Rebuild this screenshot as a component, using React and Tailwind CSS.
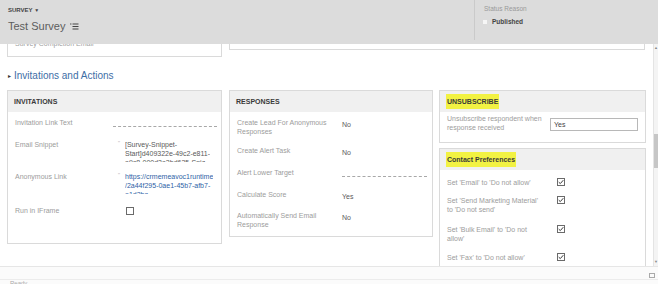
import React from "react";

function CheckBox({ checked }) {
  return (
    <svg width="8" height="8" viewBox="0 0 8 8" className="block">
      <rect x="0.5" y="0.5" width="7" height="7" fill="white" stroke="#6a6a6a" />
      {checked && <path d="M1.7 4.1 L3.3 5.6 L6.3 2.2" fill="none" stroke="#3a3a3a" strokeWidth="1" />}
    </svg>
  );
}

function Card({ title, highlight, className, children }) {
  return (
    <div className={`border border-[#dadada] bg-white overflow-hidden ${className}`}>
      <div className="h-[21px] bg-[#f0f0f0] px-[6px] flex items-center">
        {highlight ? (
          <span className="bg-[#f2f243] px-[1px] py-[3px] text-[7px] font-bold text-[#3a3a3a]">{title}</span>
        ) : (
          <span className="text-[7px] font-bold text-[#3a3a3a]">{title}</span>
        )}
      </div>
      {children}
    </div>
  );
}

function Dashed({ w }) {
  return <div className={`border-b border-dashed border-[#a8a8a8] mt-[5px] ${w}`} />;
}

export default function App() {
  return (
    <div className="w-[658px] h-[284px] overflow-hidden bg-white flex flex-col font-['Liberation_Sans',Arial,sans-serif] leading-[9px]">
      {/* header */}
      <div className="h-[44px] shrink-0 bg-[#dcdcdc] flex">
        <div className="w-[474px] pl-[8px] pt-[6px]">
          <div className="text-[6px] font-bold text-[#444] leading-[8px]">
            SURVEY <span className="text-[5px]">▼</span>
          </div>
          <div className="flex items-center gap-[5px] mt-[5px]">
            <span className="text-[11px] leading-[14px] text-[#5c5c5c]">Test Survey</span>
            <svg width="9" height="7" viewBox="0 0 9 7">
              <rect x="0" y="0.5" width="1.5" height="1" fill="#555" />
              <rect x="2.5" y="0.5" width="6" height="1" fill="#444" />
              <rect x="2.5" y="3" width="6" height="1" fill="#444" />
              <rect x="2.5" y="5.5" width="6" height="1" fill="#444" />
            </svg>
          </div>
        </div>
        <div className="flex-1 flex">
          <div className="w-[1px] h-[40px] bg-[#cacaca]" />
          <div className="pl-[9px] pt-[5px]">
            <div className="text-[6.5px] text-[#9a9a9a] leading-[8px]">Status Reason</div>
            <div className="flex items-center gap-[5px] mt-[4px] -ml-[1px]">
              <div className="w-[4px] h-[4px] bg-[#f6f6f6]" />
              <span className="text-[6.5px] font-bold text-[#444]">Published</span>
            </div>
          </div>
        </div>
      </div>

      {/* body */}
      <div className="h-[222px] shrink-0 flex">
        <div className="w-[653px] pl-[7px]">
          <div className="flex gap-[7px] h-[13px]">
            <div className="w-[215px] h-[13px] border-x border-b border-[#dadada] overflow-hidden">
              <div className="pl-[7px] -mt-[5px] text-[7px] text-[#a0a0a0]">Survey Completion Email</div>
            </div>
            <div className="w-[416px] h-[6px] border-x border-b border-[#dadada]" />
          </div>

          <div className="mt-[12px] h-[14px] flex items-center">
            <span className="text-[6px] text-[#333] ml-[1px]">▸</span>
            <span className="ml-[3px] text-[10px] leading-[14px] text-[#3d6ea6]">Invitations and Actions</span>
          </div>

          <div className="mt-[7px] flex items-start">
            {/* invitations */}
            <Card title="INVITATIONS" className="w-[215px] h-[154px]">
              <div className="pl-[7px] pt-[6px] text-[7px]">
                <div className="flex">
                  <div className="w-[98px] text-[#9c9c9c]">Invitation Link Text</div>
                  <Dashed w="w-[104px]" />
                </div>
                <div className="flex mt-[13px]">
                  <div className="w-[98px] text-[#9c9c9c]">Email Snippet</div>
                  <div className="w-[12px] text-[#aaa] text-[5px] leading-[6px] pl-[5px]">''</div>
                  <div className="h-[22px] overflow-hidden text-[#5a5a5a] whitespace-nowrap">
                    <div>[Survey-Snippet-</div>
                    <div>Start]d409322e-49c2-e811-</div>
                    <div>a9c8-000d3a2bd635-Sniz</div>
                  </div>
                </div>
                <div className="flex mt-[10px]">
                  <div className="w-[98px] text-[#9c9c9c]">Anonymous Link</div>
                  <div className="w-[12px] text-[#aaa] text-[5px] leading-[6px] pl-[5px]">''</div>
                  <div className="h-[22px] overflow-hidden text-[#2f5fa6] whitespace-nowrap">
                    <div>https://crmemeavoc1runtime</div>
                    <div>/2a44f295-0ae1-45b7-afb7-</div>
                    <div>e1d3ba</div>
                  </div>
                </div>
                <div className="flex mt-[12px] items-center">
                  <div className="w-[111px] text-[#9c9c9c]">Run in IFrame</div>
                  <CheckBox />
                </div>
              </div>
            </Card>

            {/* responses */}
            <Card title="RESPONSES" className="w-[204px] h-[147px] ml-[7px]">
              <div className="pl-[7px] pt-[6px] text-[7px]">
                <div className="flex">
                  <div className="w-[105px] text-[#9c9c9c]">Create Lead For Anonymous<br />Responses</div>
                  <div className="mt-[2px] text-[#5a5a5a]">No</div>
                </div>
                <div className="flex mt-[10px]">
                  <div className="w-[105px] text-[#9c9c9c]">Create Alert Task</div>
                  <div className="mt-[2px] text-[#5a5a5a]">No</div>
                </div>
                <div className="flex mt-[11px]">
                  <div className="w-[105px] text-[#9c9c9c]">Alert Lower Target</div>
                  <Dashed w="w-[85px]" />
                </div>
                <div className="flex mt-[13px]">
                  <div className="w-[105px] text-[#9c9c9c]">Calculate Score</div>
                  <div className="mt-[2px] text-[#5a5a5a]">Yes</div>
                </div>
                <div className="flex mt-[10px]">
                  <div className="w-[105px] text-[#9c9c9c]">Automatically Send Email<br />Response</div>
                  <div className="mt-[2px] text-[#5a5a5a]">No</div>
                </div>
              </div>
            </Card>

            {/* right column */}
            <div className="ml-[6px] w-[207px] flex flex-col gap-[5px]">
              <Card title="UNSUBSCRIBE" highlight className="h-[53px]">
                <div className="pl-[7px] pt-[2px] text-[7px] flex">
                  <div className="w-[103px] text-[#9c9c9c]">Unsubscribe respondent when<br />response received</div>
                  <div className="mt-[4px] w-[88px] h-[13px] border border-[#b8b8b8] px-[3px] flex items-center text-[#444]">Yes</div>
                </div>
              </Card>
              <Card title="Contact Preferences" highlight className="h-[140px]">
                <div className="pl-[7px] pt-[8px] text-[7px]">
                  <div className="flex">
                    <div className="w-[110px] text-[#9c9c9c]">Set 'Email' to 'Do not allow'</div>
                    <CheckBox checked />
                  </div>
                  <div className="flex mt-[9px]">
                    <div className="w-[110px] text-[#9c9c9c]">Set 'Send Marketing Material'<br />to 'Do not send'</div>
                    <CheckBox checked />
                  </div>
                  <div className="flex mt-[11px]">
                    <div className="w-[110px] text-[#9c9c9c]">Set 'Bulk Email' to 'Do not<br />allow'</div>
                    <CheckBox checked />
                  </div>
                  <div className="flex mt-[10px]">
                    <div className="w-[110px] text-[#9c9c9c]">Set 'Fax' to 'Do not allow'</div>
                    <CheckBox checked />
                  </div>
                </div>
              </Card>
            </div>
          </div>
        </div>

        {/* scrollbar */}
        <div className="w-[5px] bg-[#f4f4f4] border-l border-[#e4e4e4] flex flex-col items-center">
          <div className="h-[8px] text-[4px] leading-[8px] text-[#888]">▲</div>
          <div className="mt-[82px] w-[4px] h-[34px] bg-[#c6c6c6]" />
          <div className="flex-1" />
          <div className="h-[8px] text-[4px] leading-[8px] text-[#888]">▼</div>
        </div>
      </div>

      {/* footer */}
      <div className="flex-1 border-t border-[#e6e6e6] bg-[#fbfbfb] flex flex-col">
        <div className="h-[13px] border-b border-[#ececec] flex justify-end pr-[3px] items-end">
          <div className="w-[6px] h-[5px] border border-[#aaa] mb-[1px]" />
        </div>
        <div className="pl-[10px] text-[6px] text-[#aaa] leading-[6px]">Ready</div>
      </div>
    </div>
  );
}
